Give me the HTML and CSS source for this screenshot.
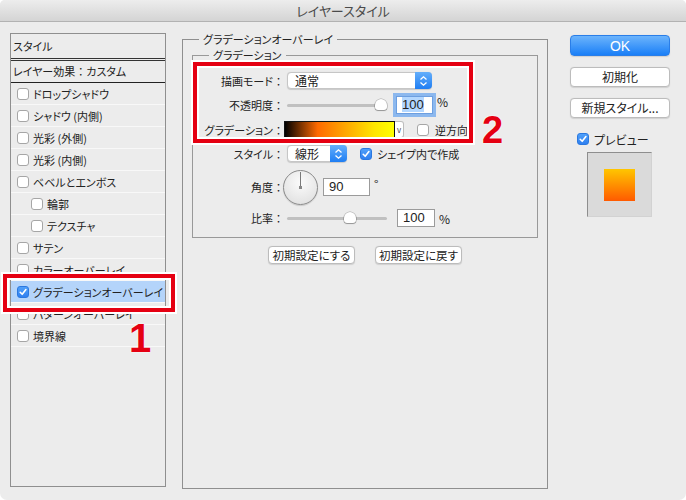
FILE: index.html
```html
<!DOCTYPE html>
<html lang="ja">
<head>
    <meta charset="UTF-8">
    <meta name="viewport" content="width=device-width, initial-scale=1.0">
    <title>レイヤースタイル</title>
    <link rel="stylesheet" href="styles.css">
</head>
<body>
    <div class="window">
        <div class="titlebar">レイヤースタイル</div>

        <div class="dialog">
            <!-- 左側のスタイル一覧 -->
            <div class="styles-panel">
                <div class="panel-head">スタイル</div>
                <div class="panel-sub">レイヤー効果<span class="colon">：</span>カスタム</div>
                <ul class="effect-list">
                    <li><span class="cb"></span>ドロップシャドウ</li>
                    <li><span class="cb"></span>シャドウ (内側)</li>
                    <li><span class="cb"></span>光彩 (外側)</li>
                    <li><span class="cb"></span>光彩 (内側)</li>
                    <li><span class="cb"></span>ベベルとエンボス</li>
                    <li class="sub"><span class="cb"></span>輪郭</li>
                    <li class="sub"><span class="cb"></span>テクスチャ</li>
                    <li><span class="cb"></span>サテン</li>
                    <li><span class="cb"></span>カラーオーバーレイ</li>
                    <li class="selected"><span class="cb on"><svg width="10" height="10" viewBox="0 0 10 10"><path d="M2.2 5.3 L4.2 7.3 L7.9 2.6" stroke="#fff" stroke-width="1.6" fill="none" stroke-linecap="round" stroke-linejoin="round"/></svg></span>グラデーションオーバーレイ</li>
                    <li><span class="cb"></span>パターンオーバーレイ</li>
                    <li><span class="cb"></span>境界線</li>
                </ul>
            </div>

            <!-- 中央の設定 -->
            <div class="middle">
                <fieldset class="effect-box">
                    <legend>グラデーションオーバーレイ</legend>
                    <fieldset class="grad-box">
                        <legend>グラデーション</legend>

                        <div class="row r1">
                            <span class="label">描画モード<span class="colon">：</span></span>
                            <div class="select mode">
                                <span class="value">通常</span>
                                <span class="arrow"><svg width="9" height="12" viewBox="0 0 9 12"><path d="M1.5 4.5 L4.5 1.8 L7.5 4.5 M1.5 7.5 L4.5 10.2 L7.5 7.5" stroke="#fff" stroke-width="1.3" fill="none"/></svg></span>
                            </div>
                        </div>

                        <div class="row r2">
                            <span class="label">不透明度<span class="colon">：</span></span>
                            <div class="slider opacity">
                                <div class="track"></div>
                                <div class="thumb" style="left: 88px"></div>
                            </div>
                            <div class="num focus"><span class="sel">100</span></div>
                            <span class="unit">%</span>
                        </div>

                        <div class="row r3">
                            <span class="label">グラデーション<span class="colon">：</span></span>
                            <div class="grad"></div>
                            <div class="grad-drop">v</div>
                            <span class="cb reverse"></span>逆方向
                        </div>

                        <div class="row r4">
                            <span class="label">スタイル<span class="colon">：</span></span>
                            <div class="select kind">
                                <span class="value">線形</span>
                                <span class="arrow"><svg width="9" height="12" viewBox="0 0 9 12"><path d="M1.5 4.5 L4.5 1.8 L7.5 4.5 M1.5 7.5 L4.5 10.2 L7.5 7.5" stroke="#fff" stroke-width="1.3" fill="none"/></svg></span>
                            </div>
                            <span class="cb on align"><svg width="10" height="10" viewBox="0 0 10 10"><path d="M2.2 5.3 L4.2 7.3 L7.9 2.6" stroke="#fff" stroke-width="1.6" fill="none" stroke-linecap="round" stroke-linejoin="round"/></svg></span>シェイプ内で作成
                        </div>

                        <div class="row r5">
                            <span class="label">角度<span class="colon">：</span></span>
                            <div class="dial"></div>
                            <div class="num angle">90</div>
                            <span class="unit">°</span>
                        </div>

                        <div class="row r6">
                            <span class="label">比率<span class="colon">：</span></span>
                            <div class="slider scale">
                                <div class="track"></div>
                                <div class="thumb" style="left: 57px"></div>
                            </div>
                            <div class="num">100</div>
                            <span class="unit">%</span>
                        </div>
                    </fieldset>

                    <div class="defaults">
                        <button class="btn">初期設定にする</button>
                        <button class="btn">初期設定に戻す</button>
                    </div>
                </fieldset>
            </div>

            <!-- 右側のボタン -->
            <div class="side">
                <button class="btn btn-ok">OK</button>
                <button class="btn">初期化</button>
                <button class="btn">新規スタイル...</button>
                <div class="preview-check"><span class="cb on"><svg width="10" height="10" viewBox="0 0 10 10"><path d="M2.2 5.3 L4.2 7.3 L7.9 2.6" stroke="#fff" stroke-width="1.6" fill="none" stroke-linecap="round" stroke-linejoin="round"/></svg></span>プレビュー</div>
                <div class="preview"><div class="swatch"></div></div>
            </div>
        </div>

        <!-- 注釈 -->
        <div class="mark mark-1"></div>
        <div class="num-mark n1">1</div>
        <div class="mark mark-2"></div>
        <div class="num-mark n2">2</div>
    </div>
</body>
</html>
```

FILE: styles.css
```css
/* ダイアログ全体 */
body {
    margin: 0;
    background: #fff;
    font-family: "Noto Sans CJK JP", sans-serif;
    font-size: 11px;
    color: #222;
    font-feature-settings: "palt";
}
.window {
    position: relative;
    width: 686px;
    height: 500px;
    background: #ececec;
    border-radius: 5px 5px 7px 7px;
    overflow: hidden;
}
.titlebar {
    height: 21px;
    line-height: 21px;
    text-align: center;
    font-size: 13px;
    color: #4a4a4a;
    background: linear-gradient(#ededed, #d4d4d4);
    border-bottom: 1px solid #b2b2b2;
}
.dialog {
    display: flex;
    align-items: flex-start;
    padding-left: 10px;
}
.colon {
    font-feature-settings: normal;
}

/* 左の一覧 */
.styles-panel {
    width: 156px;
    height: 454px;
    margin-top: 11px;
    box-sizing: border-box;
    border: 1px solid #8f8f8f;
}
.panel-head {
    height: 24px;
    line-height: 24px;
    padding-left: 2px;
    border-bottom: 3px double #333;
}
.panel-sub {
    height: 21px;
    line-height: 21px;
    padding-left: 2px;
    border-bottom: 1px solid #222;
}
.effect-list {
    list-style: none;
    margin: 0;
    padding: 0;
}
.effect-list li {
    height: 21px;
    display: flex;
    align-items: center;
    padding-left: 6px;
    border-bottom: 1px solid #f8f8f8;
    white-space: nowrap;
}
.effect-list li.sub {
    padding-left: 20px;
}
.effect-list li.selected {
    background: #b4d4fa;
}
.cb {
    width: 12px;
    height: 12px;
    box-sizing: border-box;
    border: 1px solid #a6a6a6;
    border-radius: 3px;
    background: #fff;
    margin-right: 4px;
    flex: none;
}
.cb.on {
    display: flex;
    align-items: center;
    justify-content: center;
    background: linear-gradient(#50a0f9, #2f80f0);
    border-color: #2a78e0;
}

/* 中央 */
.effect-box {
    margin: 10px 0 0 16px;
    width: 366px;
    height: 457px;
    box-sizing: border-box;
    border: 1px solid #8f8f8f;
    padding: 2px 9px 0;
    min-width: 0;
}
.effect-box > legend {
    padding: 0 4px;
    margin-left: 7px;
    line-height: 14px;
}
.grad-box {
    margin: 0;
    height: 190px;
    box-sizing: border-box;
    border: 1px solid #999;
    padding: 7px 4px 0;
    min-width: 0;
}
.grad-box > legend {
    padding: 0 4px;
    margin-left: 12px;
    line-height: 14px;
}
.row {
    display: flex;
    align-items: center;
    white-space: nowrap;
}
.r1 { height: 23px; }
.r2 { height: 25px; }
.r3 { height: 25px; }
.r4 { height: 23px; }
.r5 { height: 44px; }
.r6 { height: 18px; }
.label {
    width: 87px;
    margin-right: 3px;
    text-align: right;
    flex: none;
}
.select {
    display: flex;
    height: 17px;
    box-sizing: border-box;
    background: #fff;
    border: 1px solid #c6c6c6;
    border-radius: 4px;
    box-shadow: 0 0.5px 1px rgba(0, 0, 0, 0.15);
}
.select .value {
    flex: 1;
    padding-left: 7px;
    line-height: 15px;
    font-size: 12px;
}
.select .arrow {
    width: 17px;
    margin: -1px -1px -1px 0;
    border-radius: 0 4px 4px 0;
    background: linear-gradient(#64aefb, #1f7ef3);
    display: flex;
    align-items: center;
    justify-content: center;
}
.select.mode { width: 145px; }
.select.kind { width: 60px; }
.cb.align { margin-left: 13px; margin-right: 5px; }

.slider {
    position: relative;
    height: 12px;
    width: 100px;
    flex: none;
}
.slider.opacity { width: 100px; margin-right: 9px; }
.slider.scale { margin-right: 10px; }
.track {
    position: absolute;
    left: 0;
    right: 0;
    top: 5px;
    height: 3px;
    border-radius: 2px;
    background: #c0c0c0;
}
.thumb {
    position: absolute;
    top: 0;
    width: 12px;
    height: 11px;
    background: #fff;
    border-radius: 6px 6px 3px 3px;
    box-shadow: 0 0 0 0.5px rgba(0, 0, 0, 0.3), 0 1px 1px rgba(0, 0, 0, 0.25);
}
.num {
    width: 38px;
    height: 18px;
    box-sizing: border-box;
    border: 1px solid #9b9b9b;
    background: #fff;
    padding-left: 5px;
    line-height: 16px;
    font-size: 13px;
    font-family: "Liberation Sans", "Noto Sans CJK JP", sans-serif;
}
.num.focus {
    width: 37px;
    border-color: #6d9fe0;
    box-shadow: 0 0 0 3px #8cb8ee;
}
.num.focus .sel {
    background: #b3d7ff;
}
.num.angle {
    width: 47px;
    margin-left: 5px;
}
.unit {
    margin-left: 4px;
    align-self: flex-start;
    margin-top: -1px;
    font-size: 12px;
}
.r2 .unit, .r6 .unit { margin-top: 1px; }
.r5 .unit { margin-top: 10px; }
.grad {
    width: 111px;
    height: 17px;
    margin-left: -3px;
    box-sizing: border-box;
    border: 1px solid #111;
    background: linear-gradient(to right, #000 0%, #ff6a00 30%, #ffa600 55%, #ffe600 82%, #ffff00 100%);
}
.grad-drop {
    width: 9px;
    height: 17px;
    box-sizing: border-box;
    border: 1px solid #bdbdbd;
    border-left: 0;
    border-radius: 0 3px 3px 0;
    background: #fff;
    font-size: 8px;
    line-height: 15px;
    text-align: center;
    color: #444;
}
.cb.reverse { margin-left: 13px; margin-right: 6px; }
.dial {
    position: relative;
    width: 35px;
    height: 35px;
    box-sizing: border-box;
    margin-left: -4px;
    border: 1px solid #8a8a8a;
    border-radius: 50%;
    background: radial-gradient(circle at 50% 35%, #fbfbfb, #dcdcdc);
    box-shadow: 0 1px 1px rgba(0, 0, 0, 0.15);
}
.dial::before {
    content: "";
    position: absolute;
    left: 16px;
    top: 1px;
    width: 1px;
    height: 16px;
    background: #7a7a7a;
}
.dial::after {
    content: "";
    position: absolute;
    left: 15px;
    top: 15px;
    width: 3px;
    height: 3px;
    background: #888;
}
.defaults {
    display: flex;
    justify-content: center;
    gap: 20px;
    margin-top: 8px;
}

/* ボタン */
.btn {
    height: 18px;
    box-sizing: border-box;
    border: 1px solid #bcbcbc;
    border-radius: 4px;
    background: #fff;
    padding: 0;
    font-family: inherit;
    font-size: 11.5px;
    font-feature-settings: "palt";
    line-height: 16px;
    color: #222;
    box-shadow: 0 0.5px 1px rgba(0, 0, 0, 0.12);
}
.defaults .btn {
    width: 87px;
}

/* 右側 */
.side {
    margin-left: 22px;
    width: 100px;
    padding-top: 13px;
    display: flex;
    flex-direction: column;
}
.side .btn {
    width: 100px;
    height: 20px;
    margin-top: 11px;
    font-size: 12px;
}
.side .btn-ok {
    height: 21px;
    margin-top: 0;
    background: linear-gradient(#6cb4fc, #1a7ff7);
    border-color: #2a7ee8;
    color: #fff;
    font-size: 14px;
    font-family: "Liberation Sans", sans-serif;
}
.preview-check {
    display: flex;
    align-items: center;
    height: 12px;
    margin: 15px 0 0 7px;
    font-size: 12px;
}
.preview-check .cb { margin-right: 5px; }
.preview {
    width: 65px;
    height: 65px;
    box-sizing: border-box;
    margin: 7px 0 0 17px;
    background: #dadada;
    border: 1px solid;
    border-color: #8e8e8e #d2d2d2 #d2d2d2 #8e8e8e;
    display: flex;
    align-items: center;
    justify-content: center;
}
.swatch {
    width: 31px;
    height: 32px;
    background: linear-gradient(#ffc600, #ff5a00);
}

/* 赤い注釈 */
.mark {
    position: absolute;
    box-sizing: border-box;
    border: 4px solid #e50012;
    box-shadow: 0 0 0 2px #fff, inset 0 0 0 2px #fff;
}
.mark-1 {
    left: 3px;
    top: 274px;
    width: 172px;
    height: 38px;
}
.mark-2 {
    left: 193px;
    top: 62px;
    width: 280px;
    height: 81px;
}
.num-mark {
    position: absolute;
    font-family: "Liberation Sans", sans-serif;
    font-weight: bold;
    color: #e50012;
    line-height: 1;
    text-shadow: 0 0 2px #fff, 0 0 1px #fff;
}
.n1 {
    left: 129px;
    top: 318px;
    font-size: 40px;
}
.n2 {
    left: 482px;
    top: 111px;
    font-size: 38px;
}
```
